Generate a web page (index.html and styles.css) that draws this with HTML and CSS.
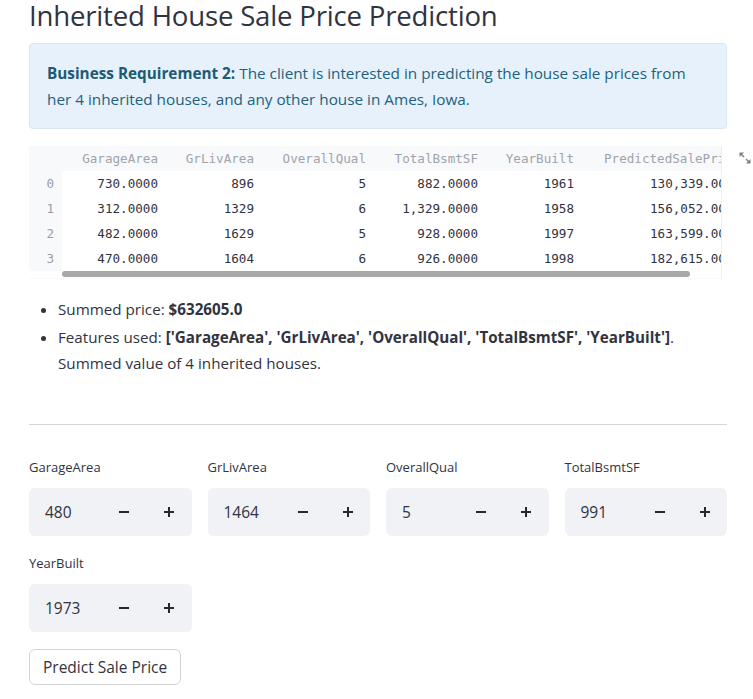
FILE: index.html
```html
<!DOCTYPE html>
<html>
<head>
<meta charset="utf-8">
<link rel="stylesheet" href="styles.css">
</head>
<body>
<main class="page">
  <h1 class="title">Inherited House Sale Price Prediction</h1>

  <div class="info">
    <b>Business Requirement 2:</b> The client is interested in predicting the house sale prices from her 4 inherited houses, and any other house in Ames, Iowa.
  </div>

  <div class="table-block">
    <div class="table-wrap">
      <table class="grid">
        <colgroup>
          <col class="c-idx"><col class="c1"><col class="c2"><col class="c3"><col class="c4"><col class="c5"><col class="c6">
        </colgroup>
        <thead>
          <tr><th></th><th>GarageArea</th><th>GrLivArea</th><th>OverallQual</th><th>TotalBsmtSF</th><th>YearBuilt</th><th class="last">PredictedSalePrice</th></tr>
        </thead>
        <tbody>
          <tr><td class="idx">0</td><td>730.0000</td><td>896</td><td>5</td><td>882.0000</td><td>1961</td><td class="last">130,339.0000</td></tr>
          <tr><td class="idx">1</td><td>312.0000</td><td>1329</td><td>6</td><td>1,329.0000</td><td>1958</td><td class="last">156,052.0000</td></tr>
          <tr><td class="idx">2</td><td>482.0000</td><td>1629</td><td>5</td><td>928.0000</td><td>1997</td><td class="last">163,599.0000</td></tr>
          <tr><td class="idx">3</td><td>470.0000</td><td>1604</td><td>6</td><td>926.0000</td><td>1998</td><td class="last">182,615.0000</td></tr>
        </tbody>
      </table>
      <div class="scroll-row"><div class="scroll-thumb"></div></div>
    </div>
    <button class="expand" aria-label="Fullscreen">
      <svg width="12" height="12" viewBox="0 0 12 12">
        <path d="M0.5 0.5 H5 L0.5 5 Z" fill="#7d808a"/>
        <path d="M1.5 1.5 L5 5" stroke="#7d808a" stroke-width="1.4"/>
        <path d="M11.5 11.5 H7 L11.5 7 Z" fill="#7d808a"/>
        <path d="M10.5 10.5 L7 7" stroke="#7d808a" stroke-width="1.4"/>
      </svg>
    </button>
  </div>

  <ul class="bullets">
    <li>Summed price: <b>$632605.0</b></li>
    <li>Features used: <b>['GarageArea', 'GrLivArea', 'OverallQual', 'TotalBsmtSF', 'YearBuilt']</b>.<br>Summed value of 4 inherited houses.</li>
  </ul>

  <hr class="divider">

  <div class="inputs">
    <div class="field">
      <label class="label">GarageArea</label>
      <div class="num">
        <span class="val">480</span>
        <span class="step"><svg width="10" height="10" viewBox="0 0 10 10"><rect x="0" y="4" width="10" height="2" fill="#262730"/></svg></span>
        <span class="step"><svg width="10" height="10" viewBox="0 0 10 10"><rect x="0" y="4" width="10" height="2" fill="#262730"/><rect x="4" y="0" width="2" height="10" fill="#262730"/></svg></span>
      </div>
    </div>
    <div class="field">
      <label class="label">GrLivArea</label>
      <div class="num">
        <span class="val">1464</span>
        <span class="step"><svg width="10" height="10" viewBox="0 0 10 10"><rect x="0" y="4" width="10" height="2" fill="#262730"/></svg></span>
        <span class="step"><svg width="10" height="10" viewBox="0 0 10 10"><rect x="0" y="4" width="10" height="2" fill="#262730"/><rect x="4" y="0" width="2" height="10" fill="#262730"/></svg></span>
      </div>
    </div>
    <div class="field">
      <label class="label">OverallQual</label>
      <div class="num">
        <span class="val">5</span>
        <span class="step"><svg width="10" height="10" viewBox="0 0 10 10"><rect x="0" y="4" width="10" height="2" fill="#262730"/></svg></span>
        <span class="step"><svg width="10" height="10" viewBox="0 0 10 10"><rect x="0" y="4" width="10" height="2" fill="#262730"/><rect x="4" y="0" width="2" height="10" fill="#262730"/></svg></span>
      </div>
    </div>
    <div class="field">
      <label class="label">TotalBsmtSF</label>
      <div class="num">
        <span class="val">991</span>
        <span class="step"><svg width="10" height="10" viewBox="0 0 10 10"><rect x="0" y="4" width="10" height="2" fill="#262730"/></svg></span>
        <span class="step"><svg width="10" height="10" viewBox="0 0 10 10"><rect x="0" y="4" width="10" height="2" fill="#262730"/><rect x="4" y="0" width="2" height="10" fill="#262730"/></svg></span>
      </div>
    </div>
    <div class="field">
      <label class="label">YearBuilt</label>
      <div class="num">
        <span class="val">1973</span>
        <span class="step"><svg width="10" height="10" viewBox="0 0 10 10"><rect x="0" y="4" width="10" height="2" fill="#262730"/></svg></span>
        <span class="step"><svg width="10" height="10" viewBox="0 0 10 10"><rect x="0" y="4" width="10" height="2" fill="#262730"/><rect x="4" y="0" width="2" height="10" fill="#262730"/></svg></span>
      </div>
    </div>
  </div>

  <button class="predict">Predict Sale Price</button>
</main>
</body>
</html>
```

FILE: styles.css
```css
html, body {
  margin: 0;
  padding: 0;
  background: #ffffff;
}
body {
  font-family: "Open Sans", "Noto Sans", sans-serif;
  color: #31333f;
  width: 753px;
  height: 699px;
  overflow: hidden;
}
.page {
  width: 698px;
  margin-left: 29px;
  display: flex;
  flex-direction: column;
  align-items: flex-start;
}
.title {
  margin: -2px 0 0 0;
  font-size: 27.6px;
  font-weight: 400;
  line-height: 34px;
  color: #31333f;
  letter-spacing: -0.2px;
}
.info {
  margin-top: 11px;
  box-sizing: border-box;
  width: 698px;
  padding: 16px 17px;
  background: #e7f1fb;
  border: 1px solid #d8e7f6;
  border-radius: 4px;
  font-size: 15.3px;
  line-height: 26px;
  color: #22617e;
}
.info b { color: #1d5a74; }

.table-block {
  position: relative;
  margin-top: 17px;
  width: 698px;
}
.table-wrap {
  width: 692px;
  overflow: hidden;
  background: #f8f9fb;
  border-right: 1px solid #eceef1;
}
.grid {
  border-collapse: collapse;
  table-layout: fixed;
  width: 752px;
  font-family: "DejaVu Sans Mono", "Liberation Mono", monospace;
  font-size: 12.6px;
}
.c-idx { width: 33px; }
.c1 { width: 104px; }
.c2 { width: 96px; }
.c3 { width: 112px; }
.c4 { width: 112px; }
.c5 { width: 96px; }
.c6 { width: 199px; }
.grid th {
  height: 25px;
  padding: 0 8px 0 0;
  text-align: right;
  font-weight: 400;
  color: #a0a3ac;
  white-space: nowrap;
  overflow: hidden;
}
.grid td {
  height: 25px;
  padding: 0 8px 0 0;
  text-align: right;
  background: #ffffff;
  color: #31333f;
  white-space: nowrap;
  overflow: hidden;
}
.grid td.idx {
  background: #f8f9fb;
  color: #9a9da6;
}
.grid th.last {
  text-align: left;
  padding: 0 0 0 22px;
}
.grid td.last {
  text-align: left;
  padding: 0 0 0 68px;
}
.scroll-row {
  height: 7px;
  padding-left: 33px;
  background: #ffffff;
}
.scroll-thumb {
  width: 628px;
  height: 6px;
  border-radius: 3px;
  background: #a8a8aa;
}
.table-wrap::after {
  content: "";
  display: block;
  height: 1px;
  background: #f8f9fb;
}
.expand {
  position: absolute;
  top: 6px;
  right: -24px;
  padding: 0;
  margin: 0;
  border: 0;
  background: transparent;
  width: 12px;
  height: 12px;
  display: flex;
}

.bullets {
  margin: 17px 0 0 0;
  padding: 0 0 0 29px;
  font-size: 15.2px;
  line-height: 26px;
  color: #31333f;
}
.bullets li { margin-bottom: 2px; }
.bullets li:last-child { margin-bottom: 0; }
.bullets b { font-weight: 700; }

.divider {
  margin: 48px 0 0 0;
  width: 698px;
  border: 0;
  height: 1px;
  background: #d6d6d9;
}

.inputs {
  margin-top: 32px;
  width: 698px;
  display: grid;
  grid-template-columns: repeat(4, 1fr);
  column-gap: 16px;
  row-gap: 17px;
}
.field {
  display: flex;
  flex-direction: column;
}
.label {
  font-size: 13px;
  line-height: 20px;
  height: 20px;
  margin-bottom: 11px;
  color: #31333f;
}
.num {
  height: 48px;
  background: #f0f2f6;
  border-radius: 6px;
  display: flex;
  align-items: center;
}
.val {
  flex: 1;
  padding-left: 16px;
  font-size: 15.5px;
  color: #31333f;
}
.step {
  width: 45px;
  height: 48px;
  display: flex;
  align-items: center;
  justify-content: center;
}

.predict {
  margin-top: 17px;
  height: 36px;
  padding: 0 13px;
  background: #ffffff;
  border: 1px solid #d3d4d8;
  border-radius: 6px;
  font-family: "Open Sans", "Noto Sans", sans-serif;
  font-size: 15.5px;
  color: #31333f;
}
```
